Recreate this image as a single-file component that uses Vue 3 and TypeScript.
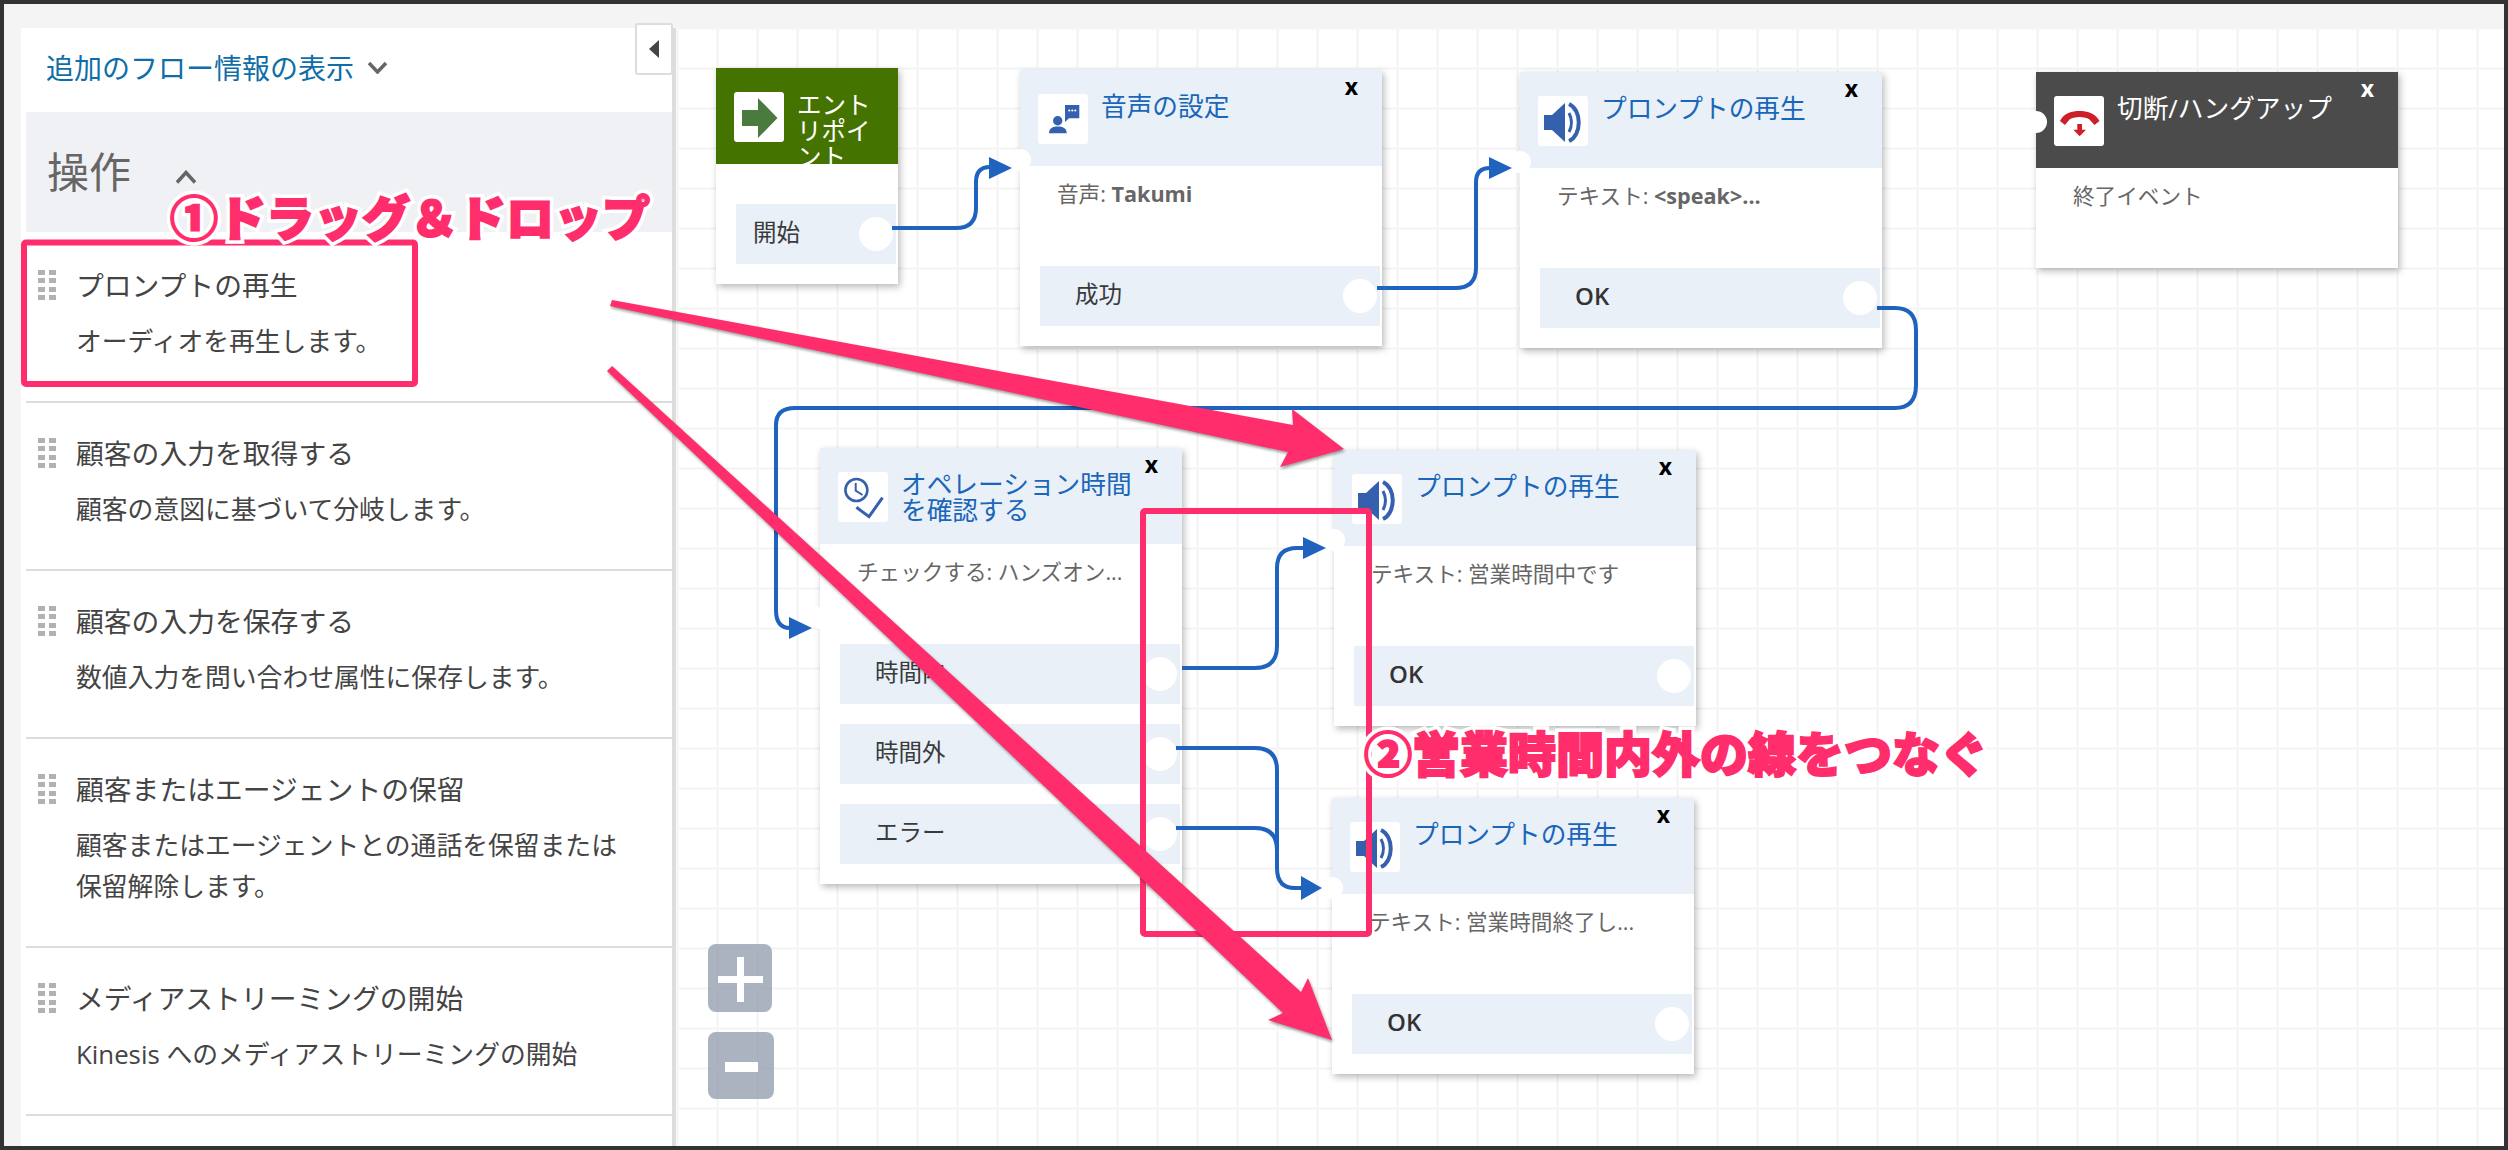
<template>
  <div class="page">
    <div class="frame">
      <aside class="sidebar">
        <button class="collapse" type="button"><span class="collapse-tri"></span></button>
        <div class="more">
          <a class="more-link">追加のフロー情報の表示</a>
          <svg class="more-chev" width="21" height="13" viewBox="0 0 21 13">
            <path d="M2 2 L10.5 11 L19 2" fill="none" stroke="#666" stroke-width="3.5" />
          </svg>
        </div>
        <div class="section">
          <span class="section-title">操作</span>
          <svg class="section-chev" width="22" height="14" viewBox="0 0 22 14">
            <path d="M2 12.5 L11 2.5 L20 12.5" fill="none" stroke="#666" stroke-width="3.5" />
          </svg>
        </div>
        <ul class="items">
          <li v-for="item in items" :key="item.title" class="item">
            <div class="item-head">
              <div class="grip"><i v-for="n in 8" :key="n"></i></div>
              <div class="item-title">{{ item.title }}</div>
            </div>
            <p class="item-desc">{{ item.desc }}</p>
          </li>
        </ul>
      </aside>

      <main class="canvas">
        <article
          v-for="node in nodes"
          :key="node.id"
          class="node"
          :class="[node.theme, { wide: node.theme !== 'entry' }]"
          :style="{ left: node.x - origin.x + 'px', top: node.y - origin.y + 'px' }"
        >
          <header class="node-head">
            <div class="node-icon">
              <svg width="50" height="50" viewBox="0 0 50 50">
                <template v-if="node.icon === 'entry'">
                  <path d="M8 18 H24 V6 L43.5 26 L24 46 V34 H8 Z" fill="#4a7a3d" />
                </template>
                <template v-else-if="node.icon === 'voice'">
                  <path d="M27 11 H41.3 V24.3 H31 L27 28 Z" fill="#3560ad" />
                  <circle cx="31.3" cy="16.5" r="1.1" fill="#fff" />
                  <circle cx="34.3" cy="16.5" r="1.1" fill="#fff" />
                  <circle cx="37.3" cy="16.5" r="1.1" fill="#fff" />
                  <circle cx="19.7" cy="26.7" r="4.7" fill="#3560ad" />
                  <path d="M11 39.3 C11 34 15 32.5 19.8 32.5 C24.6 32.5 28.7 34 28.7 39.3 Z" fill="#3560ad" />
                </template>
                <template v-else-if="node.icon === 'speaker'">
                  <path d="M6 19 H14 L27 7 V46 L14 34 H6 Z" fill="#3560ad" />
                  <path d="M31 17 Q36 26.5 31 36" fill="none" stroke="#3560ad" stroke-width="3" />
                  <path d="M31 8 C44 14 44 39 31 45" fill="none" stroke="#3560ad" stroke-width="4" />
                </template>
                <template v-else-if="node.icon === 'clock'">
                  <circle cx="18.4" cy="18" r="11" fill="none" stroke="#3560ad" stroke-width="2.6" />
                  <path d="M17.7 11 V18.7 L24.6 23" fill="none" stroke="#3560ad" stroke-width="2" />
                  <path d="M18.4 35.3 L31 44.7 L44.5 25.7" fill="none" stroke="#3560ad" stroke-width="3" />
                </template>
                <template v-else>
                  <path
                    d="M6 25 C10 17 18 15 25.5 15 C33 15 41 17 45.5 25 L40.5 29 L35.5 23.5 C32 20 19 20 15.5 23.5 L11 29 Z"
                    fill="#cc1f27"
                  />
                  <path d="M23.3 28 H28 V33.7 H32 L25.7 40.3 L19.3 33.7 H23.3 Z" fill="#cc1f27" />
                </template>
              </svg>
            </div>
            <h3 class="node-title">{{ node.title }}</h3>
          </header>
          <span v-if="node.theme !== 'entry'" class="node-close">x</span>
          <div class="node-body">
            <template v-if="node.label">
              {{ node.label }}<b v-if="node.boldValue">{{ node.value }}</b><template v-else>{{ node.value }}</template>
            </template>
          </div>
          <div v-if="node.rows.length" class="node-rows">
            <div v-for="row in node.rows" :key="row" class="node-row" :class="{ latin: row === 'OK' }">
              <span>{{ row }}</span>
              <i class="port"></i>
            </div>
          </div>
          <i v-if="node.inputTop" class="input-port" :style="{ top: node.inputTop + 'px' }"></i>
        </article>

        <svg
          class="wires"
          width="1828"
          height="1118"
          :viewBox="`${origin.x} ${origin.y} 1828 1118`"
        >
          <path v-for="d in wires" :key="d" :d="d" fill="none" stroke="#1f63bf" stroke-width="4" />
          <polygon v-for="p in wireHeads" :key="p" :points="p" fill="#1f63bf" />
        </svg>

        <div class="zoom-tools">
          <button class="zoom-btn plus" type="button"></button>
          <button class="zoom-btn minus" type="button"></button>
        </div>
      </main>
    </div>

    <svg class="marks" width="2508" height="1150" viewBox="0 0 2508 1150">
      <rect x="24" y="242.5" width="391" height="141.5" rx="2" fill="none" stroke="#ff2d6c" stroke-width="6" />
      <rect x="1143" y="511" width="226" height="423" rx="2" fill="none" stroke="#ff2d6c" stroke-width="6" />
      <g class="pink-arrow">
        <polygon points="612,300 1293,425 1292,409 1344,449 1280,467 1288,452 610,306" fill="#ff2d6c" />
        <polygon points="612,366 1301,992 1308,978 1332,1040 1268,1020 1283,1013 607,371" fill="#ff2d6c" />
      </g>
    </svg>
    <div class="callout callout-one" data-text="①ドラッグ＆ドロップ">①ドラッグ＆ドロップ</div>
    <div class="callout callout-two" data-text="②営業時間内外の線をつなぐ">②営業時間内外の線をつなぐ</div>
  </div>
</template>

<script setup lang="ts">
interface FlowNode {
  id: string;
  theme: "entry" | "blue" | "dark";
  icon: "entry" | "voice" | "speaker" | "clock" | "hangup";
  x: number;
  y: number;
  title: string;
  label?: string;
  value?: string;
  boldValue?: boolean;
  rows: string[];
  inputTop?: number;
}

const origin = { x: 676, y: 28 };

const items = [
  { title: "プロンプトの再生", desc: "オーディオを再生します。" },
  { title: "顧客の入力を取得する", desc: "顧客の意図に基づいて分岐します。" },
  { title: "顧客の入力を保存する", desc: "数値入力を問い合わせ属性に保存します。" },
  { title: "顧客またはエージェントの保留", desc: "顧客またはエージェントとの通話を保留または保留解除します。" },
  { title: "メディアストリーミングの開始", desc: "Kinesis へのメディアストリーミングの開始" },
];

const nodes: FlowNode[] = [
  { id: "entry", theme: "entry", icon: "entry", x: 716, y: 68, title: "エントリポイント", rows: ["開始"] },
  {
    id: "voice",
    theme: "blue",
    icon: "voice",
    x: 1020,
    y: 70,
    title: "音声の設定",
    label: "音声: ",
    value: "Takumi",
    boldValue: true,
    rows: ["成功"],
    inputTop: 79,
  },
  {
    id: "prompt1",
    theme: "blue",
    icon: "speaker",
    x: 1520,
    y: 72,
    title: "プロンプトの再生",
    label: "テキスト: ",
    value: "<speak>...",
    boldValue: true,
    rows: ["OK"],
    inputTop: 79,
  },
  {
    id: "hangup",
    theme: "dark",
    icon: "hangup",
    x: 2036,
    y: 72,
    title: "切断/ハングアップ",
    label: "終了イベント",
    value: "",
    rows: [],
    inputTop: 39,
  },
  {
    id: "hours",
    theme: "blue",
    icon: "clock",
    x: 820,
    y: 448,
    title: "オペレーション時間を確認する",
    label: "チェックする: ",
    value: "ハンズオン...",
    rows: ["時間内", "時間外", "エラー"],
    inputTop: 159,
  },
  {
    id: "prompt2",
    theme: "blue",
    icon: "speaker",
    x: 1334,
    y: 450,
    title: "プロンプトの再生",
    label: "テキスト: ",
    value: "営業時間中です",
    rows: ["OK"],
    inputTop: 79,
  },
  {
    id: "prompt3",
    theme: "blue",
    icon: "speaker",
    x: 1332,
    y: 798,
    title: "プロンプトの再生",
    label: "テキスト: ",
    value: "営業時間終了し...",
    rows: ["OK"],
    inputTop: 79,
  },
];

const wires = [
  "M892 228 H956 Q976 228 976 208 V182 Q976 167 990 167",
  "M1377 288 H1455 Q1476 288 1476 268 V182 Q1476 168 1490 168",
  "M1877 308 H1895 Q1916 308 1916 330 V385 Q1916 408 1895 408 H795 Q776 408 776 425 V610 Q776 628 790 628",
  "M1182 668 H1255 Q1277 668 1277 646 V568 Q1277 548 1297 548 H1304",
  "M1176 748 H1255 Q1277 748 1277 770 V868 Q1277 888 1295 888 H1302",
  "M1176 828 H1255 Q1277 828 1277 850",
];

const wireHeads = [
  "989,157 1012,168 989,179",
  "1489,157 1512,168 1489,179",
  "789,617 812,628 789,639",
  "1303,537 1326,548 1303,559",
  "1301,876 1322,888 1301,900",
];
</script>

<style scoped>
.page {
  position: relative;
  width: 2508px;
  height: 1150px;
  padding: 4px;
  box-sizing: border-box;
  background: #333;
  overflow: hidden;
  font-family: "Open Sans", "Noto Sans CJK JP", sans-serif;
}

.frame {
  display: flex;
  height: 100%;
  padding: 24px 0 0 17px;
  box-sizing: border-box;
  background: #f4f4f4;
}

.sidebar {
  position: relative;
  flex: 0 0 655px;
  box-sizing: border-box;
  background: #fff;
  border-right: 4px solid #ddd;
}

.collapse {
  position: absolute;
  top: -5px;
  right: -1px;
  width: 38px;
  height: 52px;
  padding: 0;
  box-sizing: border-box;
  background: #fff;
  border: 2px solid #ddd;
  border-radius: 3px;
  display: flex;
  align-items: center;
  justify-content: center;
}

.collapse-tri {
  width: 0;
  height: 0;
  border-top: 9px solid transparent;
  border-bottom: 9px solid transparent;
  border-right: 10px solid #444;
}

.more {
  height: 84px;
  padding: 0 0 5px 25px;
  box-sizing: border-box;
  display: flex;
  align-items: center;
  gap: 13px;
}

.more-link {
  font-size: 28px;
  line-height: 34px;
  color: #0f6ea8;
}

.section {
  margin-left: 5px;
  height: 120px;
  padding-left: 21px;
  display: flex;
  align-items: center;
  gap: 44px;
  background: #f0f1f5;
}

.section-title {
  font-size: 42px;
  line-height: 50px;
  color: #666;
}

.section-chev {
  margin-top: 10px;
}

.items {
  list-style: none;
  margin: 3px 0 0 5px;
  padding: 0;
}

.item {
  padding: 33px 40px 39px 12px;
  border-bottom: 2px solid #ddd;
}

.item-head {
  display: flex;
  align-items: center;
  gap: 20px;
  height: 34px;
}

.grip {
  display: grid;
  grid-template-columns: 7px 7px;
  grid-auto-rows: 5px;
  column-gap: 4px;
  row-gap: 3.6px;
}

.grip i {
  background: #b2b2b2;
}

.item-title {
  font-size: 27.8px;
  line-height: 34px;
  color: #444;
}

.item-desc {
  margin: 19px 0 0 38px;
  font-size: 25.8px;
  line-height: 41px;
  color: #444;
}

.canvas {
  position: relative;
  flex: 1;
  background-color: #fff;
  background-image:
    linear-gradient(to right, #f9f9f9 1px, #f3f3f3 1px, #f3f3f3 2px, #f9f9f9 2px, #f9f9f9 3px, transparent 3px),
    linear-gradient(to bottom, #f9f9f9 1px, #f3f3f3 1px, #f3f3f3 2px, #f9f9f9 2px, #f9f9f9 3px, transparent 3px);
  background-size: 40px 40px;
  background-position: 0 39px;
}

.node {
  position: absolute;
  width: 182px;
  background: #fff;
  box-shadow: 2px 3px 7px rgba(0, 0, 0, 0.28);
}

.node.wide {
  width: 362px;
}

.node-head {
  height: 96px;
  padding: 24px 0 0 18px;
  box-sizing: border-box;
  display: flex;
  align-items: flex-start;
  gap: 13px;
  overflow: hidden;
  background: #e9f0f8;
}

.entry .node-head {
  background: #447300;
}

.dark .node-head {
  background: #4b4b4b;
}

.node-icon {
  flex: 0 0 50px;
  height: 50px;
  background: #fff;
  border-radius: 3px;
}

.node-icon svg {
  display: block;
}

.node-title {
  margin: 0;
  max-width: 235px;
  font-size: 25.7px;
  line-height: 26px;
  font-weight: 400;
  color: #1a66b8;
}

.entry .node-title {
  max-width: 75px;
  font-size: 24.5px;
  color: #fff;
}

.dark .node-title {
  color: #fff;
}

.node-close {
  position: absolute;
  top: 5px;
  right: 24px;
  font-size: 23px;
  line-height: 22px;
  font-weight: 700;
  color: #000;
}

.dark .node-close {
  color: #fff;
}

.node-body {
  height: 100px;
  padding: 14px 0 0 37px;
  box-sizing: border-box;
  font-size: 21.6px;
  line-height: 28px;
  color: #666;
  white-space: pre-wrap;
}

.node-body b {
  font-weight: 700;
}

.entry .node-body {
  height: 40px;
  padding: 0;
}

.node-rows {
  display: flex;
  flex-direction: column;
  gap: 20px;
  padding: 0 2px 20px 20px;
}

.node-row {
  position: relative;
  height: 60px;
  padding: 0 0 6px 35px;
  box-sizing: border-box;
  display: flex;
  align-items: center;
  background: #e9f0f8;
  font-size: 23.5px;
  color: #3a3a3a;
}

.entry .node-row {
  padding-left: 17px;
}

.node-row.latin {
  font-size: 24px;
  font-weight: 600;
  color: #333;
}

.port {
  position: absolute;
  top: 13px;
  right: 3px;
  width: 34px;
  height: 34px;
  border-radius: 50%;
  background: #fff;
}

.input-port {
  position: absolute;
  left: -11px;
  width: 22px;
  height: 22px;
  border-radius: 50%;
  background: #fff;
}

.wires {
  position: absolute;
  top: 0;
  left: 0;
  pointer-events: none;
}

.zoom-tools {
  position: absolute;
  left: 32px;
  top: 916px;
  display: flex;
  flex-direction: column;
  align-items: flex-start;
  gap: 20px;
}

.zoom-btn {
  position: relative;
  display: block;
  padding: 0;
  border: 0;
  border-radius: 8px;
  background: rgba(137, 150, 166, 0.72);
}

.plus {
  width: 64px;
  height: 68px;
}

.plus::before,
.plus::after {
  content: "";
  position: absolute;
  background: #fff;
}

.plus::before {
  left: 10px;
  top: 32px;
  width: 45px;
  height: 7px;
}

.plus::after {
  left: 29px;
  top: 13px;
  width: 7px;
  height: 45px;
}

.minus {
  width: 66px;
  height: 67px;
}

.minus::before {
  content: "";
  position: absolute;
  left: 17px;
  top: 30px;
  width: 33px;
  height: 10px;
  background: #fff;
}

.marks {
  position: absolute;
  top: 0;
  left: 0;
  pointer-events: none;
}

.pink-arrow {
  filter: drop-shadow(1px 2px 1.5px rgba(0, 0, 0, 0.4));
}

.callout {
  position: absolute;
  z-index: 0;
  font-size: 48px;
  line-height: 56px;
  font-weight: 900;
  white-space: nowrap;
  font-family: "Noto Sans CJK JP", sans-serif;
  color: #ff2d6c;
  -webkit-text-stroke: 2px #ff2d6c;
}

.callout::before {
  content: attr(data-text);
  position: absolute;
  z-index: -1;
  top: 0;
  left: 0;
  -webkit-text-stroke: 9px #fff;
  text-shadow: 1px 2px 3px rgba(0, 0, 0, 0.35);
}

.callout-one {
  left: 170px;
  top: 187px;
}

.callout-two {
  left: 1364px;
  top: 723px;
}
</style>

<style>
html,
body {
  margin: 0;
  background: #333;
  overflow: hidden;
}
</style>
